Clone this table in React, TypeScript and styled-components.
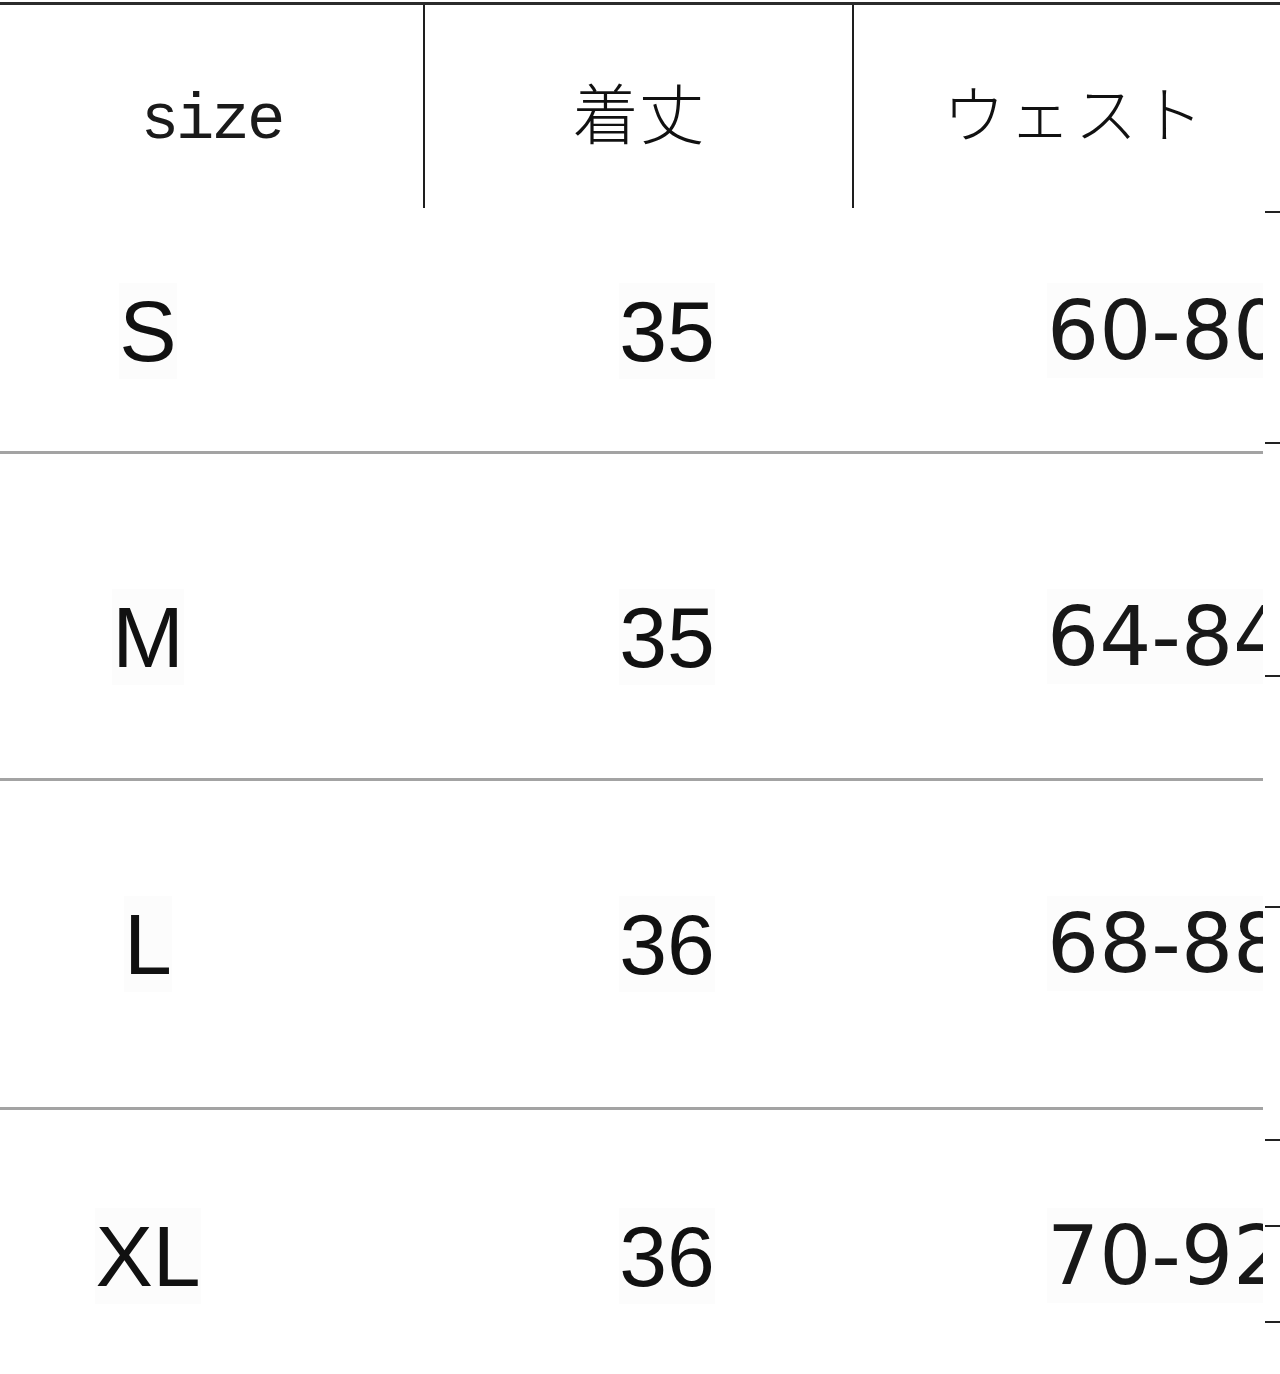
import React from "react";
import styled, { createGlobalStyle } from "styled-components";

const Global = createGlobalStyle`
  html, body { margin: 0; padding: 0; background: #ffffff; }
  body { width: 1280px; height: 1374px; overflow: hidden; }
`;

const Page = styled.div`
  width: 1280px;
  height: 1374px;
  overflow: hidden;
  background: #ffffff;
  color: #111111;
  padding-top: 2px;
  box-sizing: border-box;
`;

const HeaderRow = styled.div`
  display: grid;
  grid-template-columns: 425px 429px 436px;
  height: 206px;
  border-top: 3px solid #2b2b2b;
  box-sizing: border-box;
`;

const HeaderCell = styled.div<{ $divider?: boolean; $pad: number; $left?: number }>`
  box-sizing: border-box;
  border-right: ${(p) => (p.$divider ? "2px solid #1e1e1e" : "none")};
  padding-top: ${(p) => p.$pad}px;
  padding-left: ${(p) => p.$left ?? 0}px;
  text-align: ${(p) => (p.$left ? "left" : "center")};
  white-space: nowrap;
  line-height: 100px;
`;

const MonoLabel = styled.span`
  font-family: "Liberation Mono", "DejaVu Sans Mono", monospace;
  font-size: 64px;
  letter-spacing: -3px;
  color: #1a1a1a;
`;

const JpLabel = styled.span<{ $size: number; $spacing?: number }>`
  font-family: "Noto Sans CJK JP", "Noto Sans CJK SC", sans-serif;
  font-weight: 300;
  font-size: ${(p) => p.$size}px;
  letter-spacing: ${(p) => p.$spacing ?? 0}px;
`;

const Body = styled.div`
  display: flex;
`;

const Table = styled.div`
  width: 1263px;
  flex: none;
  overflow: hidden;
`;

const Row = styled.div<{ $height: number; $pad: number; $rule?: boolean }>`
  display: grid;
  grid-template-columns: 296px 742px 225px;
  height: ${(p) => p.$height}px;
  padding-top: ${(p) => p.$pad}px;
  box-sizing: border-box;
  border-top: ${(p) => (p.$rule ? "3px solid #a3a3a3" : "none")};
  line-height: 100px;
`;

const Cell = styled.div<{ $align: "center" | "left" }>`
  text-align: ${(p) => p.$align};
  padding-left: ${(p) => (p.$align === "left" ? "9px" : "0")};
  white-space: nowrap;
  overflow: hidden;
`;

const SizeText = styled.span`
  font-family: "Liberation Sans", Arial, sans-serif;
  font-size: 86px;
  background: #fcfcfc;
`;

const RangeText = styled.span`
  font-family: "DejaVu Sans", Verdana, sans-serif;
  font-size: 82px;
  color: #181818;
  background: #fcfcfc;
`;

const TickColumn = styled.div`
  width: 17px;
  display: flex;
  flex-direction: column;
`;

const Tick = styled.div<{ $gap: number }>`
  margin-top: ${(p) => p.$gap}px;
  height: 2px;
  width: 100%;
  margin-left: 2px;
  background: #222222;
`;

const rows = [
  { size: "S", length: "35", waist: "60-80", height: 243, pad: 73, rule: false },
  { size: "M", length: "35", waist: "64-84", height: 327, pad: 133, rule: true },
  { size: "L", length: "36", waist: "68-88", height: 329, pad: 113, rule: true },
  { size: "XL", length: "36", waist: "70-92", height: 267, pad: 96, rule: true },
];

const ticks = [3, 229, 231, 229, 231, 84, 94];

export default function App() {
  return (
    <Page>
      <Global />
      <HeaderRow>
        <HeaderCell $divider $pad={66}>
          <MonoLabel>size</MonoLabel>
        </HeaderCell>
        <HeaderCell $divider $pad={55}>
          <JpLabel $size={66}>着丈</JpLabel>
        </HeaderCell>
        <HeaderCell $pad={56} $left={89}>
          <JpLabel $size={62} $spacing={4}>ウェスト</JpLabel>
        </HeaderCell>
      </HeaderRow>
      <Body>
        <Table>
          {rows.map((r) => (
            <Row key={r.size} $height={r.height} $pad={r.pad} $rule={r.rule}>
              <Cell $align="center">
                <SizeText>{r.size}</SizeText>
              </Cell>
              <Cell $align="center">
                <SizeText>{r.length}</SizeText>
              </Cell>
              <Cell $align="left">
                <RangeText>{r.waist}</RangeText>
              </Cell>
            </Row>
          ))}
        </Table>
        <TickColumn>
          {ticks.map((g, i) => (
            <Tick key={i} $gap={g} />
          ))}
        </TickColumn>
      </Body>
    </Page>
  );
}
